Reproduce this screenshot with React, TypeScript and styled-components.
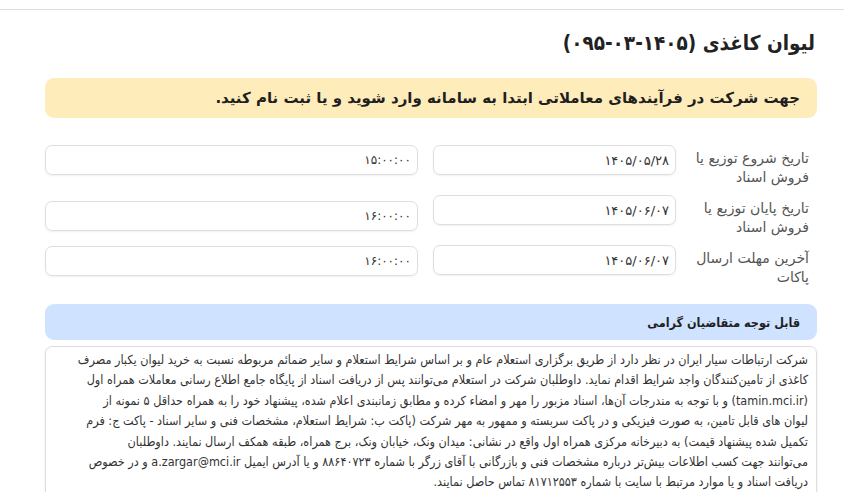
import React from 'react'
import styled, { createGlobalStyle } from 'styled-components'

const GlobalStyle = createGlobalStyle`
  * {
    box-sizing: border-box;
  }
  body {
    margin: 0;
    background: #fff;
    font-family: 'DejaVu Sans', sans-serif;
    color: #212529;
  }
`

const Page = styled.div`
  direction: rtl;
  border-top: 1px solid #dcdcdc;
  margin-top: 9px;
  padding: 0 27px 0 45px;
`

const Title = styled.h1`
  margin: 17px 2px 0;
  height: 51px;
  font-family: 'DejaVu Sans Condensed', 'DejaVu Sans', sans-serif;
  font-size: 20.5px;
  line-height: 32px;
  font-weight: 700;
  color: #222;
`

const Alert = styled.div<{ $tone: 'warning' | 'info' }>`
  background: ${(p) => (p.$tone === 'warning' ? '#ffecbb' : '#cfe2ff')};
  border-radius: 9px;
  padding: 0 17px;
  height: ${(p) => (p.$tone === 'warning' ? '40px' : '36px')};
  display: flex;
  align-items: center;
  font-size: ${(p) => (p.$tone === 'warning' ? '15px' : '12.5px')};
  font-family: ${(p) =>
    p.$tone === 'warning'
      ? "'DejaVu Sans', sans-serif"
      : "'DejaVu Sans Condensed', 'DejaVu Sans', sans-serif"};
  font-weight: 700;
  color: #1f1f1f;
`

const Form = styled.div`
  margin-top: 27px;
  display: grid;
  grid-template-columns: 126px 243px 1fr;
  column-gap: 15px;
  row-gap: 8px;
  align-items: start;
  margin-bottom: 17px;
`

const Label = styled.div`
  font-size: 14px;
  line-height: 19px;
  color: #555;
  padding: 4px 8px 0 0;
`

const Input = styled.div<{ $offset?: number; $small?: boolean }>`
  height: 30px;
  border: 1px solid #dedede;
  border-radius: 7px;
  box-shadow: 0 1px 2px rgba(0, 0, 0, 0.06);
  display: flex;
  align-items: center;
  padding: 0 6px;
  font-size: ${(p) => (p.$small ? '12px' : '13px')};
  color: #333;
  margin-top: ${(p) => p.$offset ?? 0}px;
`

const Notice = styled.div`
  margin-top: 6px;
  border: 1px solid #dedede;
  border-radius: 7px;
  box-shadow: 0 1px 3px rgba(0, 0, 0, 0.08);
  padding: 3px 8px 6px;
  font-family: 'DejaVu Sans Condensed', 'DejaVu Sans', sans-serif;
  font-size: 12.5px;
  line-height: 20.4px;
  color: #333;
`

const rows = [
  { label: 'تاریخ شروع توزیع یا فروش اسناد', date: '۱۴۰۵/۰۵/۲۸', time: '۱۵:۰۰:۰۰', offset: 0 },
  { label: 'تاریخ پایان توزیع یا فروش اسناد', date: '۱۴۰۵/۰۶/۰۷', time: '۱۶:۰۰:۰۰', offset: 6 },
  { label: 'آخرین مهلت ارسال پاکات', date: '۱۴۰۵/۰۶/۰۷', time: '۱۶:۰۰:۰۰', offset: 1 },
]

const noticeLines = [
  'شرکت ارتباطات سیار ایران در نظر دارد از طریق برگزاری استعلام عام و بر اساس شرایط استعلام و سایر ضمائم مربوطه نسبت به خرید لیوان یکبار مصرف',
  'کاغذی از تامین‌کنندگان واجد شرایط اقدام نماید. داوطلبان شرکت در استعلام می‌توانند پس از دریافت اسناد از پایگاه جامع اطلاع رسانی معاملات همراه اول',
  '(tamin.mci.ir) و با توجه به مندرجات آن‌ها، اسناد مزبور را مهر و امضاء کرده و مطابق زمانبندی اعلام شده، پیشنهاد خود را به همراه حداقل ۵ نمونه از',
  'لیوان های قابل تامین، به صورت فیزیکی و در پاکت سربسته و ممهور به مهر شرکت (پاکت ب: شرایط استعلام، مشخصات فنی و سایر اسناد - پاکت ج: فرم',
  'تکمیل شده پیشنهاد قیمت) به دبیرخانه مرکزی همراه اول واقع در نشانی: میدان ونک، خیابان ونک، برج همراه، طبقه همکف ارسال نمایند. داوطلبان',
  'می‌توانند جهت کسب اطلاعات بیش‌تر درباره مشخصات فنی و بازرگانی با آقای زرگر با شماره ۸۸۶۴۰۷۲۳ و یا آدرس ایمیل a.zargar@mci.ir و در خصوص',
  'دریافت اسناد و یا موارد مرتبط با سایت با شماره ۸۱۷۱۲۵۵۳ تماس حاصل نمایند.',
]

const App = () => {
  return (
    <>
      <GlobalStyle />
      <Page>
        <Title>لیوان کاغذی (۱۴۰۵-۰۳-۰۹۵)</Title>
        <Alert $tone="warning">
          جهت شرکت در فرآیندهای معاملاتی ابتدا به سامانه وارد شوید و یا ثبت نام کنید.
        </Alert>
        <Form>
          {rows.map((r) => (
            <React.Fragment key={r.label}>
              <Label>{r.label}</Label>
              <Input>{r.date}</Input>
              <Input $offset={r.offset} $small>
                {r.time}
              </Input>
            </React.Fragment>
          ))}
        </Form>
        <Alert $tone="info">قابل توجه متقاضیان گرامی</Alert>
        <Notice>
          {noticeLines.map((line, i) => (
            <React.Fragment key={i}>
              {line}
              {i < noticeLines.length - 1 && <br />}
            </React.Fragment>
          ))}
        </Notice>
      </Page>
    </>
  )
}

export default App
